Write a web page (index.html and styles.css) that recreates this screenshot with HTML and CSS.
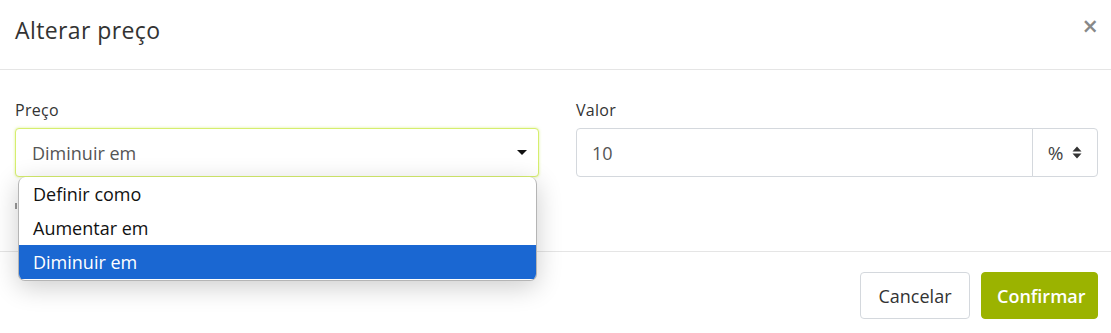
FILE: index.html
```html
<!DOCTYPE html>
<html lang="pt">
<head>
<meta charset="utf-8">
<title>Alterar preço</title>
<link rel="stylesheet" href="styles.css">
</head>
<body>
<div class="modal">
  <div class="modal-header">
    <h4 class="modal-title">Alterar preço</h4>
    <span class="close">&times;</span>
  </div>
  <div class="modal-body">
    <div class="field">
      <label class="label">Preço</label>
      <div class="select-wrap">
        <div class="select">
          <span>Diminuir em</span>
          <span class="caret"></span>
        </div>
        <ul class="options">
          <li>Definir como</li>
          <li>Aumentar em</li>
          <li class="active">Diminuir em</li>
        </ul>
      </div>
      <div class="help-mark"></div>
    </div>
    <div class="field">
      <label class="label">Valor</label>
      <div class="input-group">
        <div class="input">10</div>
        <div class="addon">
          <span>%</span>
          <svg class="updown" width="10" height="13" viewBox="0 0 10 13"><path d="M5 0.5 L9.5 5.5 H0.5 Z M0.5 7.5 H9.5 L5 12.5 Z" fill="#333"/></svg>
        </div>
      </div>
    </div>
  </div>
  <div class="modal-footer">
    <button class="btn btn-default">Cancelar</button>
    <button class="btn btn-primary">Confirmar</button>
  </div>
</div>
</body>
</html>
```

FILE: styles.css
```css
html, body {
  margin: 0;
  padding: 0;
  background: #fff;
}
body {
  font-family: "Open Sans", "Liberation Sans", sans-serif;
  color: #333;
}
.modal {
  width: 1111px;
}
.modal-header {
  border-bottom: 1px solid #e5e5e5;
  display: flex;
  align-items: center;
  justify-content: space-between;
  padding: 0 13px 0 15px;
  box-sizing: border-box;
  height: 70px;
}
.modal-title {
  margin: 0;
  font-size: 23px;
  letter-spacing: 0.4px;
  font-weight: 400;
  color: #333;
  position: relative;
  top: -5px;
}
.close {
  font-size: 27px;
  color: #888;
  font-weight: 600;
  line-height: 1;
  position: relative;
  top: -9px;
}
.modal-body {
  display: grid;
  grid-template-columns: 524px 522px;
  column-gap: 37px;
  padding: 30px 13px 0 15px;
  height: 182px;
  box-sizing: border-box;
  border-bottom: 1px solid #e5e5e5;
}
.label {
  display: block;
  font-size: 16px;
  letter-spacing: 0.3px;
  line-height: 20px;
  color: #333;
  margin-bottom: 8px;
}
.select-wrap {
  position: relative;
}
.select {
  height: 49px;
  box-sizing: border-box;
  border: 1px solid #d6ee6e;
  box-shadow: 0 0 3px rgba(200, 230, 80, 0.6);
  border-radius: 4px;
  display: flex;
  align-items: center;
  justify-content: space-between;
  padding: 0 11px 0 16px;
  font-size: 18px;
  color: #555;
  background: #fff;
}
.caret {
  width: 0;
  height: 0;
  border-left: 5px solid transparent;
  border-right: 5px solid transparent;
  border-top: 5px solid #111;
}
.options {
  position: absolute;
  top: 49px;
  left: 3px;
  width: 519px;
  margin: 0;
  padding: 0 0 1px;
  list-style: none;
  background: #fff;
  border: 1px solid #b5b5b5;
  border-top: none;
  border-radius: 7px;
  box-shadow: 0 6px 26px rgba(0, 0, 0, 0.2);
  box-sizing: border-box;
  overflow: hidden;
  z-index: 2;
}
.options li {
  height: 34px;
  line-height: 34px;
  padding-left: 14px;
  font-size: 18px;
  color: #111;
}
.options li.active {
  background: #1a67d2;
  color: #fff;
}
.help-mark {
  margin: 26px 0 0;
  width: 2px;
  height: 6px;
  background: #999;
}
.input-group {
  display: flex;
  height: 49px;
}
.input {
  flex: 1;
  border: 1px solid #d4d8dd;
  border-radius: 4px 0 0 4px;
  display: flex;
  align-items: center;
  padding-left: 15px;
  font-size: 18px;
  color: #555;
}
.addon {
  width: 66px;
  box-sizing: border-box;
  border: 1px solid #d4d8dd;
  margin-left: -1px;
  border-radius: 0 4px 4px 0;
  display: flex;
  align-items: center;
  justify-content: center;
  gap: 9px;
  font-size: 19px;
  color: #444;
}
.modal-footer {
  display: flex;
  justify-content: flex-end;
  gap: 11px;
  padding: 20px 13px 0 0;
}
.btn {
  height: 47px;
  font-family: inherit;
  font-size: 18px;
  border-radius: 4px;
  padding: 0 15px;
  cursor: pointer;
}
.btn-default {
  background: #fff;
  border: 1px solid #d4d8dd;
  color: #333;
  width: 110px;
}
.btn-primary {
  background: #9bb300;
  border: 1px solid #9bb300;
  color: #fff;
  font-weight: 600;
  width: 117px;
}
```
